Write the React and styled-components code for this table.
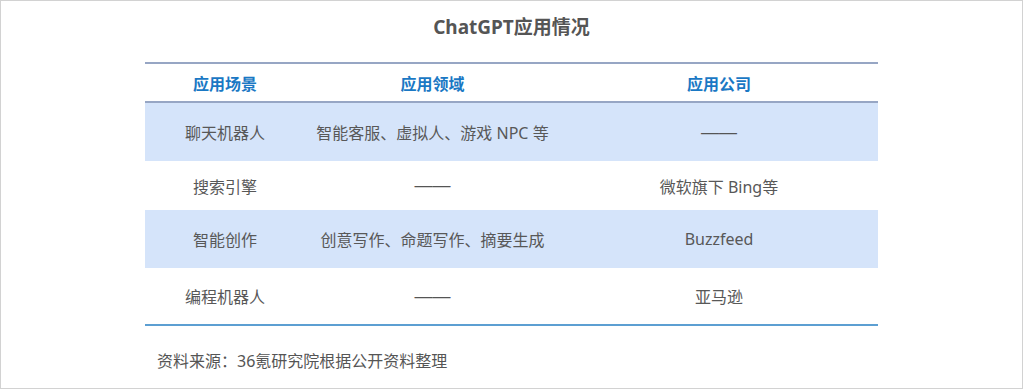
import React from "react"
import styled, { createGlobalStyle } from "styled-components"

const GlobalStyle = createGlobalStyle`
    html, body {
        margin: 0;
        padding: 0;
        background: #fff;
    }
    body {
        font-family: "Noto Sans", "Noto Sans CJK SC", sans-serif;
    }
`

const Frame = styled.div`
    box-sizing: border-box;
    width: 1023px;
    height: 389px;
    border: 1px solid #d2d2d2;
    display: flex;
    flex-direction: column;
`

const Title = styled.h1`
    margin: 0;
    height: 52px;
    padding-bottom: 2px;
    box-sizing: border-box;
    display: flex;
    align-items: center;
    justify-content: center;
    font-size: 19px;
    font-weight: 700;
    color: #555;
`

const Table = styled.div`
    margin: 9px 0 0 144px;
    width: 733px;
    border-top: 2px solid #97a6c4;
    border-bottom: 2px solid #5c9fd2;
`

const Row = styled.div`
    display: grid;
    grid-template-columns: 160px 255px 318px;
    height: ${p => p.h}px;
    background: ${p => (p.shaded ? "#d5e4fa" : "#fff")};
    border-bottom: ${p => (p.head ? "2px solid #97a6c4" : "none")};
`

const Cell = styled.div`
    display: flex;
    align-items: center;
    justify-content: center;
    font-size: 16px;
    font-weight: ${p => (p.head ? 700 : 400)};
    color: ${p => (p.head ? "#1a78c4" : "#585858")};
    white-space: nowrap;
`

const Dash = styled.span`
    font-family: "Liberation Sans", sans-serif;
    font-size: 18px;
    color: #555;
`

const Source = styled.p`
    margin: 0;
    padding: 22px 0 0 156px;
    font-size: 16px;
    color: #555;
`

const rows = [
    { h: 58, shaded: true, cells: ["聊天机器人", "智能客服、虚拟人、游戏 NPC 等", "——"] },
    { h: 49, cells: ["搜索引擎", "——", "微软旗下 Bing等"] },
    { h: 58, shaded: true, cells: ["智能创作", "创意写作、命题写作、摘要生成", "Buzzfeed"] },
    { h: 56, cells: ["编程机器人", "——", "亚马逊"] },
]

const App = () => (
    <>
        <GlobalStyle />
        <Frame>
            <Title>ChatGPT应用情况</Title>
            <Table>
                <Row h={37} head>
                    <Cell head>应用场景</Cell>
                    <Cell head>应用领域</Cell>
                    <Cell head>应用公司</Cell>
                </Row>
                {rows.map((r, i) => (
                    <Row key={i} h={r.h} shaded={r.shaded}>
                        {r.cells.map((c, j) => (
                            <Cell key={j}>{c === "——" ? <Dash>{c}</Dash> : c}</Cell>
                        ))}
                    </Row>
                ))}
            </Table>
            <Source>资料来源：36氪研究院根据公开资料整理</Source>
        </Frame>
    </>
)

export default App
